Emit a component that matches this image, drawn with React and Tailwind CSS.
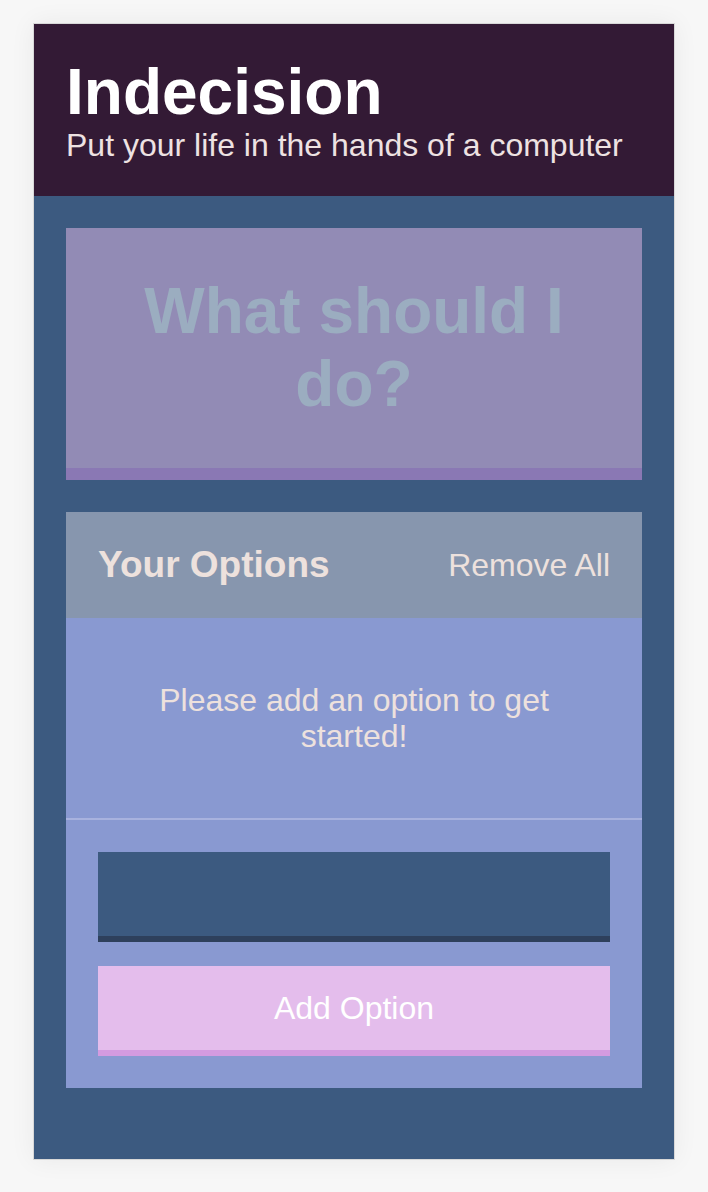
import React from "react";

export default function App() {
    return (
        <div
            className="min-h-screen bg-[#f7f7f7] pt-[23px] pl-[33px]"
            style={{ fontFamily: '"Liberation Sans", Arial, sans-serif' }}
        >
            <div className="w-[642px] border border-[#d8d8d8] shadow-[0_0_24px_rgba(0,0,0,0.06)]">
                {/* Header */}
                <header className="bg-[#331a35] px-8 pt-9 pb-8">
                    <h1 className="text-[64px] leading-none font-bold text-white">
                        Indecision
                    </h1>
                    <h2 className="mt-[3px] text-[32px] leading-[37px] text-[#eee2e2]">
                        Put your life in the hands of a computer
                    </h2>
                </header>

                <main className="bg-[#3c5a80] px-8 pt-8 pb-[71px]">
                    {/* Big action */}
                    <button
                        disabled
                        className="flex h-[252px] w-full items-center justify-center border-b-[12px] border-[#8a78b4] bg-[#928bb5] px-12 text-center text-[64px] leading-[73px] font-bold text-[#9badc0]"
                    >
                        What should I do?
                    </button>

                    {/* Options widget */}
                    <section className="mt-8 bg-[#8999d1]">
                        <div className="flex h-[106px] items-center justify-between bg-[#8796ae] px-8">
                            <h3 className="text-[37px] font-bold text-[#ede1dd]">
                                Your Options
                            </h3>
                            <button className="text-[32px] text-[#ede1dd]">
                                Remove All
                            </button>
                        </div>
                        <div className="flex h-[200px] items-center justify-center px-12 text-center text-[32px] leading-9 text-[#ede1dd]">
                            Please add an option to get started!
                        </div>
                        <form className="flex flex-col gap-6 border-t-2 border-[#a8b2de] p-8">
                            <input
                                type="text"
                                className="h-[90px] w-full border-b-[6px] border-[#2e405c] bg-[#3c5a80] px-4 text-[32px] text-white outline-none"
                            />
                            <button
                                type="button"
                                className="h-[90px] w-full border-b-[6px] border-[#d49be0] bg-[#e4bdec] text-[32px] text-white"
                            >
                                Add Option
                            </button>
                        </form>
                    </section>
                </main>
            </div>
        </div>
    );
}
